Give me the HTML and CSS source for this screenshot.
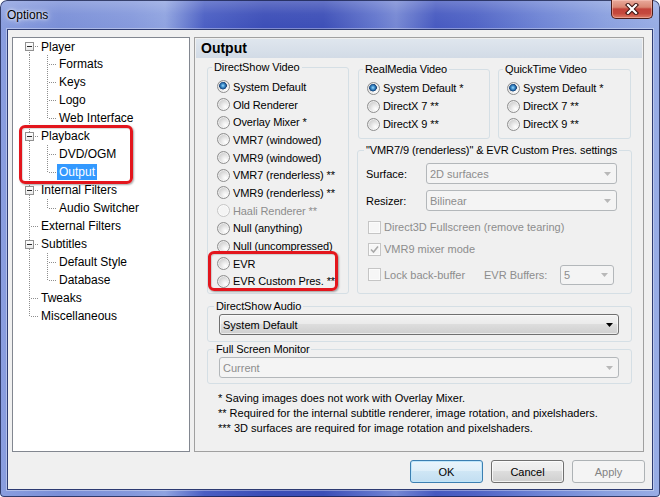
FILE: index.html
```html
<!DOCTYPE html>
<html lang="en">
<head>
<meta charset="utf-8">
<title>Options</title>
<link rel="stylesheet" href="styles.css">
</head>
<body>
<div class="window">
  <div class="titlebar">
    <span class="title">Options</span>
    <button class="close" type="button" aria-label="Close">
      <svg width="14" height="12" viewBox="0 0 14 12">
        <path d="M3 2 L11 10 M11 2 L3 10" stroke="#3a1210" stroke-width="4.2" stroke-linecap="square" fill="none"/>
        <path d="M3 2 L11 10 M11 2 L3 10" stroke="#ffffff" stroke-width="2.2" stroke-linecap="square" fill="none"/>
      </svg>
    </button>
  </div>

  <div class="client">
    <div class="main">
      <ul class="tree">
        <li class="node"><span class="cell c-exp-first"><span class="box"></span></span><span class="label">Player</span></li>
        <li class="node"><span class="cell c-pass"></span><span class="cell c-branch"></span><span class="label">Formats</span></li>
        <li class="node"><span class="cell c-pass"></span><span class="cell c-branch"></span><span class="label">Keys</span></li>
        <li class="node"><span class="cell c-pass"></span><span class="cell c-branch"></span><span class="label">Logo</span></li>
        <li class="node"><span class="cell c-pass"></span><span class="cell c-last"></span><span class="label">Web Interface</span></li>
        <li class="node"><span class="cell c-exp"><span class="box"></span></span><span class="label">Playback</span></li>
        <li class="node"><span class="cell c-pass"></span><span class="cell c-branch"></span><span class="label">DVD/OGM</span></li>
        <li class="node"><span class="cell c-pass"></span><span class="cell c-last"></span><span class="label selected">Output</span></li>
        <li class="node"><span class="cell c-exp"><span class="box"></span></span><span class="label">Internal Filters</span></li>
        <li class="node"><span class="cell c-pass"></span><span class="cell c-last"></span><span class="label">Audio Switcher</span></li>
        <li class="node"><span class="cell c-branch"></span><span class="label">External Filters</span></li>
        <li class="node"><span class="cell c-exp"><span class="box"></span></span><span class="label">Subtitles</span></li>
        <li class="node"><span class="cell c-pass"></span><span class="cell c-branch"></span><span class="label">Default Style</span></li>
        <li class="node"><span class="cell c-pass"></span><span class="cell c-last"></span><span class="label">Database</span></li>
        <li class="node"><span class="cell c-branch"></span><span class="label">Tweaks</span></li>
        <li class="node"><span class="cell c-last"></span><span class="label">Miscellaneous</span></li>
      </ul>

      <section class="page">
        <h1 class="page-head">Output</h1>
        <div class="page-body">
          <div class="top">
            <fieldset class="group ds-video">
              <legend>DirectShow Video</legend>
              <div class="opts">
                <label class="opt"><span class="radio on"></span>System Default</label>
                <label class="opt"><span class="radio"></span>Old Renderer</label>
                <label class="opt"><span class="radio"></span>Overlay Mixer *</label>
                <label class="opt"><span class="radio"></span>VMR7 (windowed)</label>
                <label class="opt"><span class="radio"></span>VMR9 (windowed)</label>
                <label class="opt"><span class="radio"></span>VMR7 (renderless) **</label>
                <label class="opt"><span class="radio"></span>VMR9 (renderless) **</label>
                <label class="opt off"><span class="radio"></span>Haali Renderer **</label>
                <label class="opt"><span class="radio"></span>Null (anything)</label>
                <label class="opt"><span class="radio"></span>Null (uncompressed)</label>
                <label class="opt"><span class="radio"></span>EVR</label>
                <label class="opt"><span class="radio"></span>EVR Custom Pres. **</label>
              </div>
            </fieldset>

            <div class="right-col">
              <div class="pair">
                <fieldset class="group rm">
                  <legend>RealMedia Video</legend>
                  <div class="opts short">
                    <label class="opt"><span class="radio on"></span>System Default *</label>
                    <label class="opt"><span class="radio"></span>DirectX 7 **</label>
                    <label class="opt"><span class="radio"></span>DirectX 9 **</label>
                  </div>
                </fieldset>
                <fieldset class="group qt">
                  <legend>QuickTime Video</legend>
                  <div class="opts short">
                    <label class="opt"><span class="radio on"></span>System Default *</label>
                    <label class="opt"><span class="radio"></span>DirectX 7 **</label>
                    <label class="opt"><span class="radio"></span>DirectX 9 **</label>
                  </div>
                </fieldset>
              </div>

              <fieldset class="group vmr">
                <legend>"VMR7/9 (renderless)" &amp; EVR Custom Pres. settings</legend>
                <div class="fields">
                  <span class="field-label">Surface:</span>
                  <div class="combo disabled"><span class="value">2D surfaces</span><svg class="arrow" width="7" height="4" viewBox="0 0 7 4"><polygon points="0,0 7,0 3.5,4"/></svg></div>
                  <span class="field-label">Resizer:</span>
                  <div class="combo disabled"><span class="value">Bilinear</span><svg class="arrow" width="7" height="4" viewBox="0 0 7 4"><polygon points="0,0 7,0 3.5,4"/></svg></div>
                </div>
                <div class="checks">
                  <label class="chk off"><span class="checkbox"></span>Direct3D Fullscreen (remove tearing)</label>
                  <label class="chk off"><span class="checkbox on"><svg width="11" height="11" viewBox="0 0 11 11"><path d="M2 5.5 L4.5 8 L9 2.5" stroke="#a8a8a8" stroke-width="1.6" fill="none"/></svg></span>VMR9 mixer mode</label>
                  <div class="chk-row off">
                    <label class="chk"><span class="checkbox"></span>Lock back-buffer</label>
                    <span class="buf-label">EVR Buffers:</span>
                    <div class="combo disabled small"><span class="value">5</span><svg class="arrow" width="7" height="4" viewBox="0 0 7 4"><polygon points="0,0 7,0 3.5,4"/></svg></div>
                  </div>
                </div>
              </fieldset>
            </div>
          </div>

          <fieldset class="group wide audio">
            <legend>DirectShow Audio</legend>
            <div class="combo"><span class="value">System Default</span><svg class="arrow" width="7" height="4" viewBox="0 0 7 4"><polygon points="0,0 7,0 3.5,4"/></svg></div>
          </fieldset>

          <fieldset class="group wide monitor">
            <legend>Full Screen Monitor</legend>
            <div class="combo disabled"><span class="value">Current</span><svg class="arrow" width="7" height="4" viewBox="0 0 7 4"><polygon points="0,0 7,0 3.5,4"/></svg></div>
          </fieldset>

          <div class="notes">
            <p>* Saving images does not work with Overlay Mixer.</p>
            <p>** Required for the internal subtitle renderer, image rotation, and pixelshaders.</p>
            <p>*** 3D surfaces are required for image rotation and pixelshaders.</p>
          </div>
        </div>
      </section>
    </div>

    <div class="buttons">
      <button class="btn default" type="button">OK</button>
      <button class="btn" type="button">Cancel</button>
      <button class="btn" type="button" disabled>Apply</button>
    </div>
  </div>

  <div class="mark mark-tree"></div>
  <div class="mark mark-evr"></div>
</div>
</body>
</html>
```

FILE: styles.css
```css
* { box-sizing: border-box; }

html, body { margin: 0; padding: 0; }

body {
  width: 660px;
  height: 497px;
  overflow: hidden;
  background: #ffffff;
  font-family: "Liberation Sans", Arial, sans-serif;
  font-size: 11px;
  color: #000;
}

/* ---------- window frame ---------- */
.window {
  position: relative;
  width: 660px;
  height: 497px;
  display: flex;
  flex-direction: column;
  border-radius: 7px 7px 4px 4px;
  background:
    linear-gradient(to bottom, rgba(255,255,255,0.22) 0, rgba(255,255,255,0.05) 14px, rgba(255,255,255,0) 30px),
    linear-gradient(to right,
      #8a9edf 0%, #7a8fd7 9%, #8599dc 20%, #8fa3e0 25%,
      #4a5ec3 31%, #3b4db7 40%, #3c4eb7 49%,
      #6376cd 57%, #7587d3 60%, #4659c0 66%, #4f63c5 72%,
      #6e84d5 82%, #8aa0df 92%, #98ade5 100%);
  box-shadow: inset 0 0 0 1px rgba(20, 28, 70, 0.75);
}

.titlebar {
  flex: none;
  height: 30px;
  display: flex;
  align-items: flex-start;
  padding-left: 7px;
}

.title {
  margin-top: 8px;
  font-size: 12px;
  line-height: 14px;
  color: #000;
  text-shadow: 0 0 6px #ffffff, 0 0 3px rgba(255,255,255,0.9);
}

.close {
  margin-left: auto;
  margin-right: 7px;
  width: 42px;
  height: 19px;
  padding: 0;
  display: flex;
  align-items: center;
  justify-content: center;
  border: 1px solid #4a1c1a;
  border-top: none;
  border-radius: 0 0 5px 5px;
  background: linear-gradient(to bottom, #e9aa9c 0%, #d98673 40%, #c2433a 50%, #c5493e 75%, #dc7b66 100%);
  box-shadow: inset 0 0 0 1px rgba(255, 210, 200, 0.45);
}

.client {
  flex: 1;
  margin: 0 8px 8px;
  padding: 7px 7px 0 4px;
  display: flex;
  flex-direction: column;
  background: #f0f0f0;
  box-shadow: 0 0 0 1px #2d3b72, 0 0 0 2px rgba(255,255,255,0.35);
}

.main {
  display: flex;
  gap: 4px;
  height: 415px;
  flex: none;
}

/* ---------- tree ---------- */
.tree {
  --vdots: repeating-linear-gradient(to bottom, #8e8e8e 0 1px, transparent 1px 2px);
  --hdots: repeating-linear-gradient(to right, #8e8e8e 0 1px, transparent 1px 2px);
  width: 178px;
  flex: none;
  margin: 0;
  padding: 0;
  list-style: none;
  background: #fff;
  border: 1px solid #828790;
  font-size: 12px;
}

.node {
  display: flex;
  align-items: center;
  height: 18px;
  padding-left: 7px;
  white-space: nowrap;
}

.node:first-child { height: 17px; }

.cell {
  flex: none;
  width: 18px;
  height: 18px;
  display: flex;
  align-items: center;
  justify-content: center;
}

.c-pass   { background: var(--vdots) 9px 0 / 1px 18px no-repeat; }
.c-branch { background: var(--vdots) 9px 0 / 1px 18px no-repeat, var(--hdots) 11px 9px / 7px 1px no-repeat; }
.c-last   { background: var(--vdots) 9px 0 / 1px 10px no-repeat, var(--hdots) 11px 9px / 7px 1px no-repeat; }
.c-exp    { background: var(--vdots) 9px 0 / 1px 18px no-repeat, var(--hdots) 15px 9px / 3px 1px no-repeat; }
.c-exp-first { height: 17px; background: var(--vdots) 9px 10px / 1px 8px no-repeat, var(--hdots) 15px 8px / 3px 1px no-repeat; }

.box {
  width: 9px;
  height: 9px;
  margin-left: 1px;
  border: 1px solid #919191;
  background: linear-gradient(#2a2a2a, #2a2a2a) center / 5px 1px no-repeat, linear-gradient(#ffffff, #e9e9e9);
}

.label {
  margin-left: 1px;
  padding: 0 2px;
  line-height: 16px;
  color: #000;
}

.label.selected {
  background: #3399ff;
  color: #fff;
}

/* ---------- property page ---------- */
.page {
  width: 450px;
  flex: none;
  border: 1px solid #a0a0a0;
  background: #f0f0f0;
}

.page-head {
  margin: 1px 1px 0;
  height: 19px;
  padding-left: 5px;
  font-size: 14px;
  font-weight: bold;
  line-height: 19px;
  background: linear-gradient(to bottom, #dfe6ee, #d2dbe6);
}

.page-body {
  padding: 3px 11px 0 12px;
}

.top {
  display: grid;
  grid-template-columns: 142px 275px;
  column-gap: 8px;
  align-items: start;
}

.group {
  margin: 0;
  padding: 0;
  min-width: 0;
  border: 1px solid #d5dfe5;
  border-radius: 3px;
}

.group legend {
  margin-left: 4px;
  padding: 0 2px;
  font-size: 11px;
  line-height: 13px;
  letter-spacing: -0.1px;
}

.opts {
  display: flex;
  flex-direction: column;
  padding: 4px 0 3px 9px;
  letter-spacing: -0.1px;
}

.opt {
  display: flex;
  align-items: center;
  gap: 3px;
  height: 17.7px;
  white-space: nowrap;
}

.opts.short { padding: 3px 0 5px 8px; }
.opts.short .opt { height: 18px; }

.off, .opt.off { color: #8d8d8d; }

.radio {
  flex: none;
  width: 13px;
  height: 13px;
  border-radius: 50%;
  border: 1px solid #8f8f8f;
  background: radial-gradient(circle at 68% 72%, #ffffff 0, #eeeeee 3px, #d4d4d4 7px);
  box-shadow: inset 0 0 0 1px rgba(255,255,255,0.55);
}

.radio.on {
  background:
    radial-gradient(circle at 45% 42%, #9fdcfb 0, #4a9ad6 1.5px, #1c5c98 3px, #173f75 3.6px, transparent 4.1px),
    radial-gradient(circle at 68% 72%, #ffffff 0, #eeeeee 3px, #d4d4d4 7px);
}

.opt.off .radio {
  border-color: #c6c6c6;
  background: #f4f4f4;
}

.right-col {
  display: flex;
  flex-direction: column;
}

.pair {
  display: flex;
  gap: 8px;
  padding: 0 1px;
  margin-top: 2px;
}

.rm { width: 132px; }
.qt { width: 133px; }

.vmr { margin-top: 5px; }
.vmr legend { margin-left: 6px; }

.fields {
  display: grid;
  grid-template-columns: 60px 1fr;
  row-gap: 6px;
  align-items: center;
  padding: 6px 14px 0 8px;
}

.checks {
  display: flex;
  flex-direction: column;
  gap: 6px;
  padding: 8px 14px 8px 10px;
}

.chk {
  display: flex;
  align-items: center;
  gap: 3px;
  height: 16px;
  white-space: nowrap;
}

.checkbox {
  flex: none;
  width: 13px;
  height: 13px;
  display: flex;
  align-items: center;
  justify-content: center;
  border: 1px solid #c5c5c5;
  background: #f6f6f6;
  box-shadow: inset 0 0 0 1px #fbfbfb;
}

.chk-row {
  display: grid;
  grid-template-columns: 116px 76px 54px;
  align-items: center;
  height: 21px;
  margin-top: 1px;
}

/* ---------- combo boxes ---------- */
.combo {
  display: flex;
  align-items: center;
  height: 21px;
  padding: 0 5px 0 3px;
  border: 1px solid #707070;
  border-radius: 3px;
  background: linear-gradient(to bottom, #f3f3f3 0%, #ebebeb 45%, #dddddd 50%, #cfcfcf 100%);
  box-shadow: inset 0 0 0 1px rgba(255,255,255,0.6);
  white-space: nowrap;
}

.combo .value { flex: 1; }
.combo .arrow { flex: none; fill: #000; }

.combo.disabled {
  border-color: #b3b7ba;
  background: #f4f4f4;
  box-shadow: none;
  color: #8d8d8d;
}

.combo.disabled .arrow { fill: #b8b8b8; }

.combo.small { height: 20px; }

.wide .combo { margin: 1px 12px 0 11px; }

.audio { margin-top: 6px; padding-bottom: 6px; }
.audio legend, .monitor legend { margin-left: 6px; }

.monitor { margin-top: 1px; padding-bottom: 5px; }

.notes {
  margin-top: 7px;
  padding-left: 11px;
  line-height: 15px;
}

.notes p { margin: 0; }

/* ---------- dialog buttons ---------- */
.buttons {
  display: flex;
  justify-content: flex-end;
  gap: 8px;
  margin-top: 8px;
}

.btn {
  width: 73px;
  height: 23px;
  padding: 0;
  font-family: inherit;
  font-size: 11px;
  color: #000;
  border: 1px solid #707070;
  border-radius: 3px;
  background: linear-gradient(to bottom, #f2f2f2 0%, #ebebeb 45%, #dddddd 50%, #cfcfcf 100%);
  box-shadow: inset 0 0 0 1px rgba(255,255,255,0.75);
}

.btn.default {
  border-color: #3c7fb1;
  background: linear-gradient(to bottom, #eaf5fc 0%, #dfeff9 45%, #cfe6f5 50%, #c2def1 100%);
  box-shadow: inset 0 0 0 1px #bfe6fb;
}

.btn:disabled {
  border-color: #adb2b5;
  background: #f4f4f4;
  box-shadow: none;
  color: #838383;
}

/* ---------- red callouts drawn over the dialog ---------- */
.mark {
  position: absolute;
  border: 3px solid #e3161d;
  border-radius: 6px;
  box-shadow: 1px 1px 2px rgba(0,0,0,0.35), inset 1px 1px 1px rgba(0,0,0,0.15);
  pointer-events: none;
}

.mark-tree { left: 19px; top: 125px; width: 114px; height: 59px; }
.mark-evr  { left: 208px; top: 251px; width: 130px; height: 40px; }
```
